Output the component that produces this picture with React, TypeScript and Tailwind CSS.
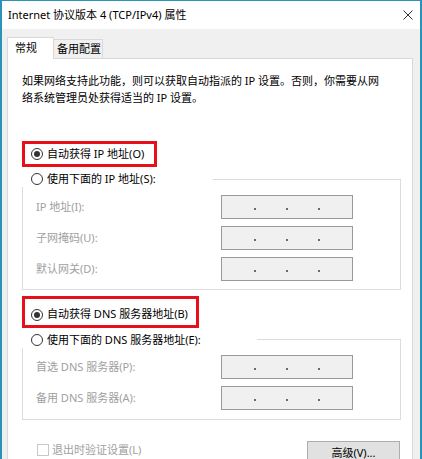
import React from 'react';

type RadioProps = { checked?: boolean };

function Radio({ checked }: RadioProps) {
  return (
    <span className="flex h-[12px] w-[12px] shrink-0 items-center justify-center rounded-full border border-[#333333] bg-white">
      {checked && <span className="h-[6px] w-[6px] rounded-full bg-[#333333]" />}
    </span>
  );
}

function IpField() {
  return (
    <div className="flex h-[24px] w-[132px] items-center justify-evenly border border-[#9a9a9a] bg-[#f0f0f0] px-[2px]">
      <span className="mt-[3px] h-[2px] w-[2px] bg-[#6a6a6a]" />
      <span className="mt-[3px] h-[2px] w-[2px] bg-[#6a6a6a]" />
      <span className="mt-[3px] h-[2px] w-[2px] bg-[#6a6a6a]" />
    </div>
  );
}

function FieldRow({ label }: { label: string }) {
  return (
    <div className="flex h-[24px] items-center">
      <span className="w-[185px] text-[#a0a0a0]">{label}</span>
      <IpField />
    </div>
  );
}

export default function App() {
  const ipRows = ['IP 地址(I):', '子网掩码(U):', '默认网关(D):'];
  const dnsRows = ['首选 DNS 服务器(P):', '备用 DNS 服务器(A):'];

  return (
    <div
      className="flex h-[459px] w-[422px] flex-col overflow-hidden border-x-2 border-t border-[#2a93b8] bg-[#f0f0f0] text-[11px] text-black"
      style={{ fontFamily: '"Noto Sans", "Noto Sans CJK SC", sans-serif' }}
    >
      {/* title bar */}
      <div className="flex h-[28px] shrink-0 items-center justify-between bg-white pl-[6px] pr-[7px]">
        <span>Internet 协议版本 4 (TCP/IPv4) 属性</span>
        <svg width="10" height="10" viewBox="0 0 10 10" className="mb-[1px]">
          <path d="M0.5 0.5 L9.5 9.5 M9.5 0.5 L0.5 9.5" stroke="#333" strokeWidth="1" />
        </svg>
      </div>

      <div className="flex flex-1 flex-col pl-[5px] pr-[7px] pt-[8px]">
        {/* tabs */}
        <div className="relative z-10 flex items-end">
          <div className="-mb-px flex h-[22px] w-[47px] items-center border-x border-t border-[#d9d9d9] bg-white pl-[7px]">
            常规
          </div>
          <div className="flex h-[19px] w-[49px] items-center border-r border-t border-[#d9d9d9] bg-[#f0f0f0] pl-[3px]">
            备用配置
          </div>
        </div>

        {/* tab page */}
        <div className="flex-1 border border-[#d9d9d9] bg-white pl-[14px] pr-[11px]">
          <p className="mt-[13px] leading-[17px]">
            如果网络支持此功能，则可以获取自动指派的 IP 设置。否则，你需要从网
            <br />
            络系统管理员处获得适当的 IP 设置。
          </p>

          <div className="mt-[35px] flex h-[26px] w-[135px] items-center gap-[4px] border-[3px] border-[#e60f1a] pl-[6px]">
            <Radio checked />
            <span>自动获得 IP 地址(O)</span>
          </div>

          <div className="relative mt-[12px] border border-[#dcdcdc] pb-[8px] pl-[13px] pt-[15px]">
            <div className="absolute -left-px -top-[9px] flex h-[16px] w-[191px] items-center gap-[4px] bg-white pl-[9px]">
              <Radio />
              <span>使用下面的 IP 地址(S):</span>
            </div>
            <div className="flex flex-col gap-[7px]">
              {ipRows.map(label => (
                <FieldRow key={label} label={label} />
              ))}
            </div>
          </div>

          <div className="mt-[6px] flex h-[32px] w-[177px] items-center gap-[4px] border-[3px] border-[#e60f1a] pl-[6px] pt-[5px]">
            <Radio checked />
            <span>自动获得 DNS 服务器地址(B)</span>
          </div>

          <div className="relative mt-[11px] border border-[#dcdcdc] pb-[9px] pl-[13px] pt-[15px]">
            <div className="absolute -left-px -top-[8px] flex h-[16px] w-[235px] items-center gap-[4px] bg-white pl-[9px]">
              <Radio />
              <span>使用下面的 DNS 服务器地址(E):</span>
            </div>
            <div className="flex flex-col gap-[7px]">
              {dnsRows.map(label => (
                <FieldRow key={label} label={label} />
              ))}
            </div>
          </div>

          <div className="mt-[21px] flex items-start justify-between">
            <div className="mt-[1px] flex h-[16px] items-center gap-[3px] pl-[15px] text-[#a0a0a0]">
              <span className="h-[12px] w-[12px] border border-[#c8c8c8] bg-white" />
              <span>退出时验证设置(L)</span>
            </div>
            <button className="mr-[1px] h-[25px] w-[93px] border border-[#adadad] bg-[#e1e1e1] text-black">
              高级(V)...
            </button>
          </div>
        </div>
      </div>
    </div>
  );
}
